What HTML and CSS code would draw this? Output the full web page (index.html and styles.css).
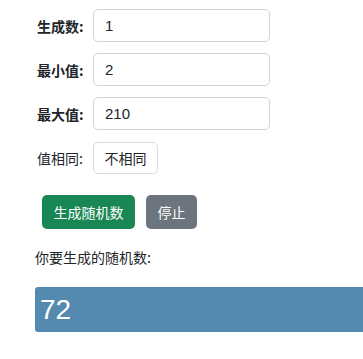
FILE: index.html
```html
<!DOCTYPE html>
<html lang="zh">
<head>
<meta charset="utf-8">
<title>随机数</title>
<link rel="stylesheet" href="styles.css">
</head>
<body>
<div class="page">
  <div class="row">
    <label class="label bold">生成数:</label>
    <input class="field" type="text" value="1">
  </div>
  <div class="row">
    <label class="label bold">最小值:</label>
    <input class="field" type="text" value="2">
  </div>
  <div class="row">
    <label class="label bold">最大值:</label>
    <input class="field" type="text" value="210">
  </div>
  <div class="row">
    <label class="label">值相同:</label>
    <button class="toggle">不相同</button>
  </div>
  <div class="actions">
    <button class="btn btn-green">生成随机数</button>
    <button class="btn btn-gray">停止</button>
  </div>
  <p class="caption">你要生成的随机数:</p>
  <div class="result">72</div>
</div>
</body>
</html>
```
FILE: styles.css
```css
html, body {
  margin: 0;
  padding: 0;
  background: #fff;
}
body {
  font-family: "Noto Sans CJK SC", "Liberation Sans", sans-serif;
  font-size: 14px;
  color: #212529;
}
.page {
  padding: 9px 0 0 35px;
}
.row {
  display: flex;
  align-items: center;
  height: 33px;
  margin-bottom: 11px;
}
.label {
  width: 58px;
  padding-left: 2px;
  box-sizing: border-box;
  font-size: 14px;
  line-height: 20px;
}
.bold {
  font-weight: bold;
}
.field {
  width: 177px;
  height: 33px;
  box-sizing: border-box;
  border: 1px solid #d4d4d4;
  border-radius: 5px;
  padding: 0 11px;
  font-family: "Liberation Sans", "Noto Sans CJK SC", sans-serif;
  font-size: 15px;
  color: #212529;
  outline: none;
}
.toggle {
  height: 32px;
  width: 65px;
  box-sizing: border-box;
  border: 1px solid #dcdcdc;
  border-radius: 5px;
  background: #fff;
  font-family: "Noto Sans CJK SC", sans-serif;
  font-size: 14px;
  color: #212529;
  padding: 0;
}
.actions {
  display: flex;
  gap: 11px;
  margin: 21px 0 0 7px;
}
.btn {
  height: 34px;
  border: none;
  border-radius: 5px;
  color: #fff;
  font-family: "Noto Sans CJK SC", sans-serif;
  font-size: 14px;
  padding: 0 11px;
}
.btn-green {
  background: #198754;
  width: 93px;
}
.btn-gray {
  background: #6c757d;
  width: 51px;
}
.caption {
  margin: 18px 0 0 0;
  line-height: 20px;
}
.result {
  margin-top: 20px;
  height: 45px;
  background: #548ab0;
  border-radius: 3px 0 0 3px;
  color: #fff;
  font-family: "Liberation Sans", sans-serif;
  font-size: 28px;
  line-height: 45px;
  padding-left: 5px;
}
```
